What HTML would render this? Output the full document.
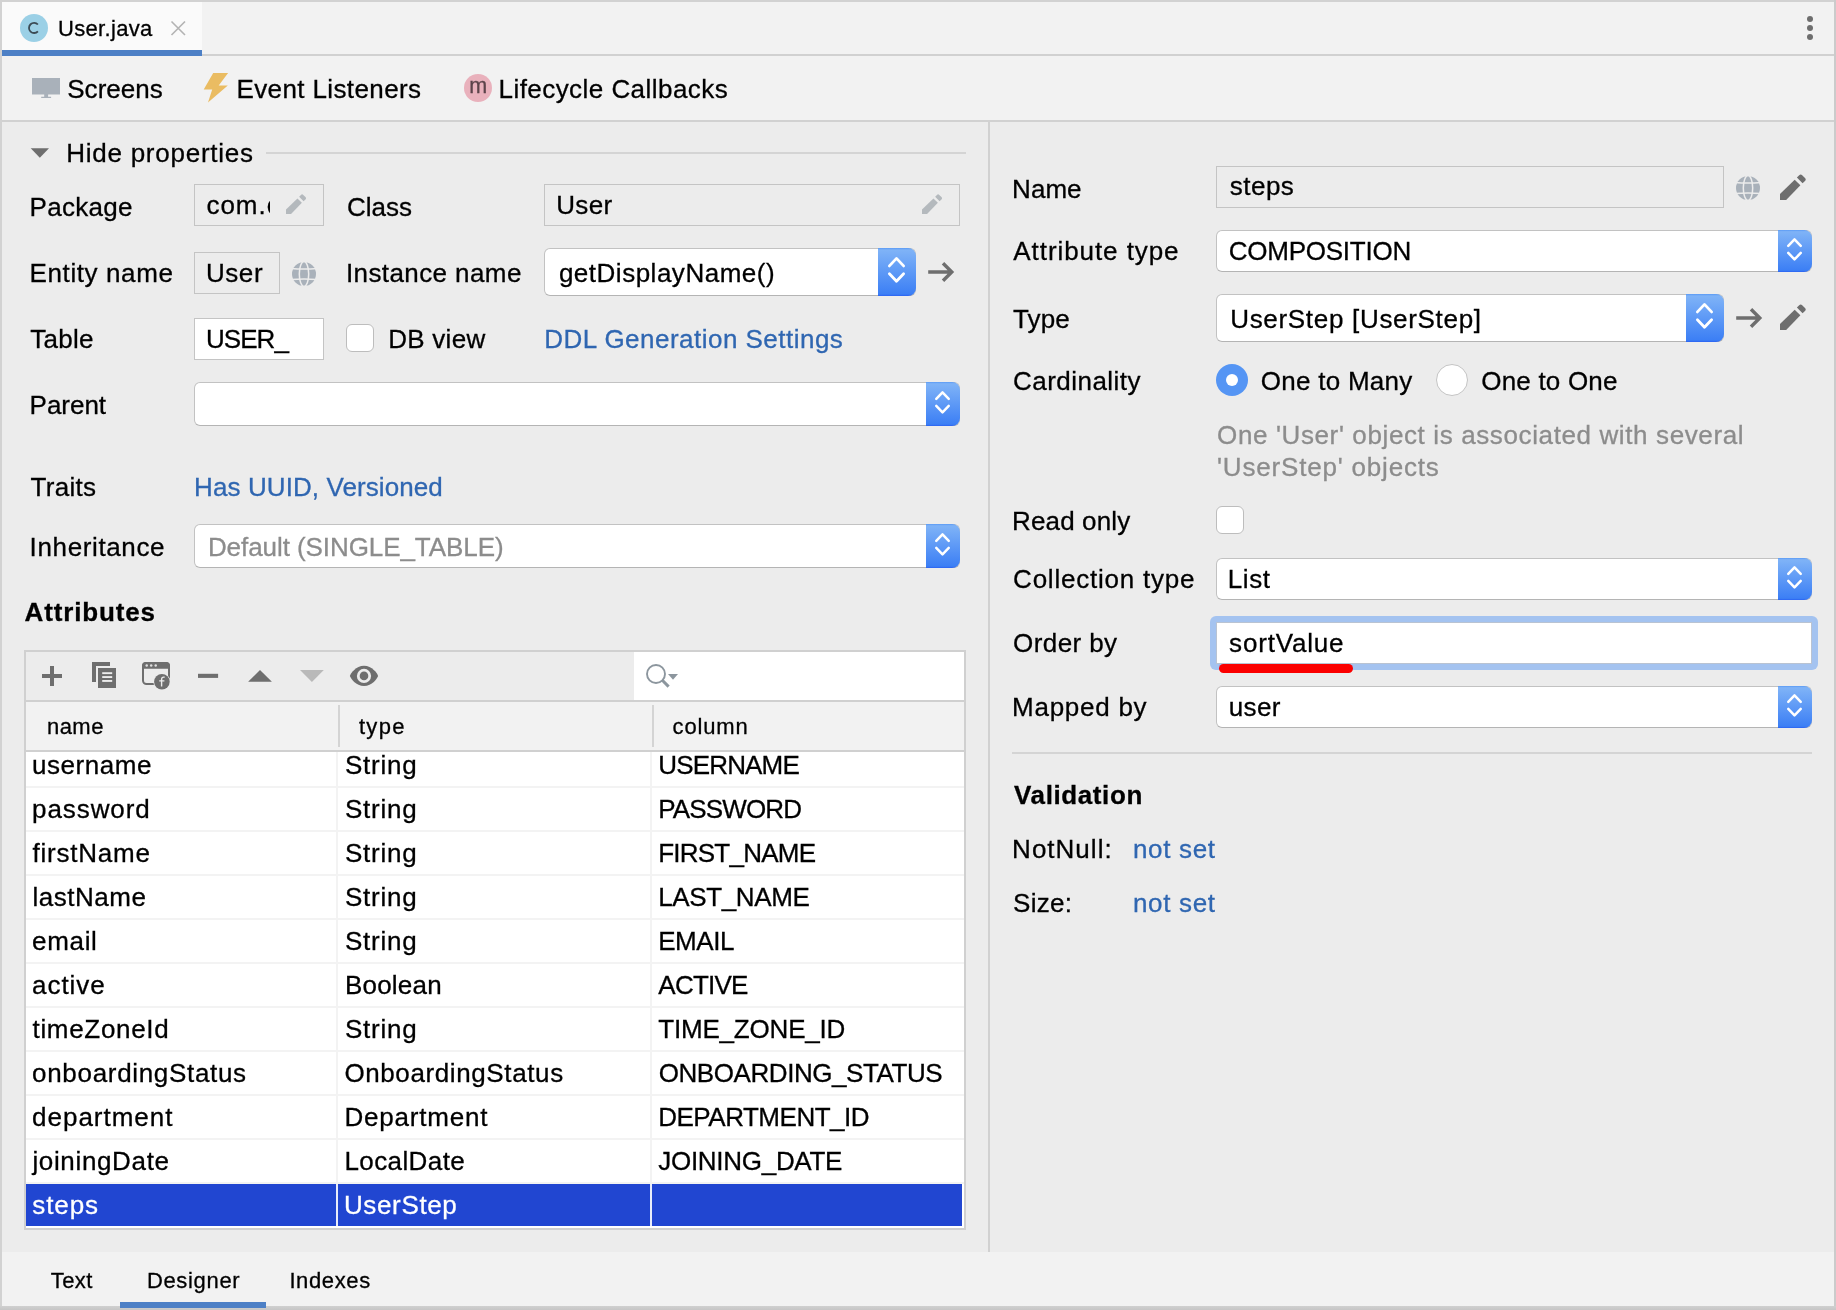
<!DOCTYPE html>
<html><head><meta charset="utf-8"><title>User.java</title><style>
html,body{margin:0;padding:0}
body{width:1836px;height:1310px;overflow:hidden;background:#ececec;position:relative;font-family:"Liberation Sans",sans-serif}
.b{position:absolute;display:block}
.t{position:absolute;white-space:pre;font-family:"Liberation Sans",sans-serif;color:#000;-webkit-text-stroke:0.3px}
.ro{border:1px solid #c4c4c4;box-sizing:border-box}
.tf{border:1px solid #c4c4c4;box-sizing:border-box;background:#fff}
.combo{background:#fff;border:1px solid #c2c2c2;border-bottom-color:#b4b4b4;border-radius:6px;box-sizing:border-box}
.cbtn{background:linear-gradient(#5a9af5 0,#7fb3f7 4%,#3c7ff5 96%,#2a62f2 100%);border-radius:0 8px 8px 0}
.chk{width:28px;height:28px;box-sizing:border-box;border:1px solid #bdbdbd;border-radius:6px;background:#fff}
.radio{width:32px;height:32px;box-sizing:border-box;border:1px solid #c4c4c4;border-radius:50%;background:#fff}
.radio.on{border:none;background:#5595f4}
.radio.on i{position:absolute;left:10px;top:10px;width:12px;height:12px;border-radius:50%;background:#fff}
</style></head>
<body>
<div class="b " style="left:0px;top:0px;width:1836px;height:56px;background:#f2f2f2"></div>
<div class="b " style="left:2px;top:2px;width:200px;height:48px;background:#fafafa"></div>
<div class="b " style="left:202px;top:54px;width:1632px;height:2px;background:#d1d1d1"></div>
<div class="b " style="left:2px;top:50px;width:200px;height:6px;background:#4d80c6"></div>
<div class="b " style="left:0px;top:56px;width:1836px;height:64px;background:#f2f2f2"></div>
<div class="b " style="left:0px;top:120px;width:1836px;height:2px;background:#d1d1d1"></div>
<div class="b " style="left:988px;top:122px;width:2px;height:1130px;background:#d1d1d1"></div>
<div class="b " style="left:0px;top:1252px;width:1836px;height:58px;background:#f2f2f2"></div>
<div class="b" style="left:20px;top:14px;width:28px;height:28px;border-radius:50%;background:#9bd0e6"></div>
<svg class="b" style="left:20px;top:14px" width="28" height="28" viewBox="0 0 28 28"><path d="M17.9 10.5 A5.1 5.1 0 1 0 17.9 17.3" fill="none" stroke="#3b4a54" stroke-width="1.8"/></svg>
<svg class="b" style="left:170px;top:20px" width="17" height="17" viewBox="0 0 17 17"><path d="M1.5 1.5 L15 15 M15 1.5 L1.5 15" stroke="#b3b3b3" stroke-width="1.6" fill="none"/></svg>
<svg class="b" style="left:1804px;top:12px" width="12" height="32" viewBox="0 0 12 32"><circle cx="6" cy="7" r="3" fill="#6e6e6e"/><circle cx="6" cy="16" r="3" fill="#6e6e6e"/><circle cx="6" cy="25" r="3" fill="#6e6e6e"/></svg>
<svg class="b" style="left:30px;top:74px" width="32" height="28" viewBox="0 0 32 28"><path d="M2 4 H30 V20.6 H18.1 V22.8 H21.1 V24 H11.2 V22.8 H14.2 V20.6 H2 Z" fill="#a9b1ba"/></svg>
<svg class="b" style="left:200px;top:70px" width="32" height="36" viewBox="0 0 32 36"><path d="M13.2 3.1 H28.1 L18.7 15.5 H27.8 L8 32.5 L12.2 19.4 H3.7 Z" fill="#eabc62"/></svg>
<div class="b" style="left:464px;top:74px;width:28px;height:28px;border-radius:50%;background:#e9b1bc"></div>
<svg class="b" style="left:28px;top:144px" width="24" height="18" viewBox="0 0 24 18"><path d="M2.7 4.2 H21 L11.85 13.8 Z" fill="#6e6e6e"/></svg>
<div class="b " style="left:266px;top:152px;width:700px;height:2px;background:#d4d4d4"></div>
<div class="b ro" style="left:194px;top:184px;width:130px;height:42px;"></div>
<div class="b ro" style="left:544px;top:184px;width:416px;height:42px;"></div>
<div class="b ro" style="left:194px;top:252px;width:86px;height:42px;"></div>
<div class="b combo" style="left:544px;top:248px;width:372px;height:48px"><div class="b cbtn" style="right:-1px;top:-1px;width:38px;height:48px"><svg class="b" style="right:0;top:0" width="38" height="48" viewBox="0 0 38 48"><path d="M11.4 17.900000000000002 L18.5 10.400000000000002 L25.6 17.900000000000002 M11.4 25.7 L18.5 33.2 L25.6 25.7" fill="none" stroke="#fff" stroke-width="2.8" stroke-linecap="round" stroke-linejoin="round"/></svg></div></div>
<div class="b tf" style="left:194px;top:318px;width:130px;height:42px;"></div>
<div class="b chk" style="left:346px;top:324px"></div>
<div class="b combo" style="left:194px;top:382px;width:766px;height:44px"><div class="b cbtn" style="right:-1px;top:-1px;width:34px;height:44px"><svg class="b" style="right:0;top:0" width="34" height="44" viewBox="0 0 34 44"><path d="M10.25 16.849999999999998 L16.5 10.449999999999998 L22.75 16.849999999999998 M10.25 23.95 L16.5 30.35 L22.75 23.95" fill="none" stroke="#fff" stroke-width="2.5" stroke-linecap="round" stroke-linejoin="round"/></svg></div></div>
<div class="b combo" style="left:194px;top:524px;width:766px;height:44px"><div class="b cbtn" style="right:-1px;top:-1px;width:34px;height:44px"><svg class="b" style="right:0;top:0" width="34" height="44" viewBox="0 0 34 44"><path d="M10.25 16.849999999999998 L16.5 10.449999999999998 L22.75 16.849999999999998 M10.25 23.95 L16.5 30.35 L22.75 23.95" fill="none" stroke="#fff" stroke-width="2.5" stroke-linecap="round" stroke-linejoin="round"/></svg></div></div>
<div class="b " style="left:24px;top:650px;width:942px;height:580px;background:#d0d0d0"></div>
<div class="b " style="left:26px;top:652px;width:938px;height:48px;background:#ececec"></div>
<div class="b " style="left:634px;top:652px;width:330px;height:48px;background:#ffffff"></div>
<div class="b " style="left:26px;top:702px;width:938px;height:48px;background:#f2f2f2"></div>
<div class="b " style="left:338px;top:705px;width:2px;height:42px;background:#d4d4d4"></div>
<div class="b " style="left:652px;top:705px;width:2px;height:42px;background:#d4d4d4"></div>
<div class="b " style="left:26px;top:752px;width:938px;height:476px;background:#ffffff"></div>
<div class="b " style="left:26px;top:786px;width:938px;height:2px;background:#f3f3f3"></div>
<div class="b " style="left:26px;top:830px;width:938px;height:2px;background:#f3f3f3"></div>
<div class="b " style="left:26px;top:874px;width:938px;height:2px;background:#f3f3f3"></div>
<div class="b " style="left:26px;top:918px;width:938px;height:2px;background:#f3f3f3"></div>
<div class="b " style="left:26px;top:962px;width:938px;height:2px;background:#f3f3f3"></div>
<div class="b " style="left:26px;top:1006px;width:938px;height:2px;background:#f3f3f3"></div>
<div class="b " style="left:26px;top:1050px;width:938px;height:2px;background:#f3f3f3"></div>
<div class="b " style="left:26px;top:1094px;width:938px;height:2px;background:#f3f3f3"></div>
<div class="b " style="left:26px;top:1138px;width:938px;height:2px;background:#f3f3f3"></div>
<div class="b " style="left:26px;top:1182px;width:938px;height:2px;background:#f3f3f3"></div>
<div class="b " style="left:26px;top:1184px;width:936px;height:42px;background:#2146d1"></div>
<div class="b " style="left:336px;top:752px;width:2px;height:432px;background:#f3f3f3"></div>
<div class="b " style="left:650px;top:752px;width:2px;height:432px;background:#f3f3f3"></div>
<div class="b " style="left:336px;top:1184px;width:2px;height:42px;background:#e8ecfa"></div>
<div class="b " style="left:650px;top:1184px;width:2px;height:42px;background:#e8ecfa"></div>
<div class="b ro" style="left:1216px;top:166px;width:508px;height:42px;"></div>
<div class="b combo" style="left:1216px;top:230px;width:596px;height:42px"><div class="b cbtn" style="right:-1px;top:-1px;width:34px;height:42px"><svg class="b" style="right:0;top:0" width="34" height="42" viewBox="0 0 34 42"><path d="M10.25 15.849999999999998 L16.5 9.449999999999998 L22.75 15.849999999999998 M10.25 22.95 L16.5 29.35 L22.75 22.95" fill="none" stroke="#fff" stroke-width="2.5" stroke-linecap="round" stroke-linejoin="round"/></svg></div></div>
<div class="b combo" style="left:1216px;top:294px;width:508px;height:48px"><div class="b cbtn" style="right:-1px;top:-1px;width:38px;height:48px"><svg class="b" style="right:0;top:0" width="38" height="48" viewBox="0 0 38 48"><path d="M11.4 17.900000000000002 L18.5 10.400000000000002 L25.6 17.900000000000002 M11.4 25.7 L18.5 33.2 L25.6 25.7" fill="none" stroke="#fff" stroke-width="2.8" stroke-linecap="round" stroke-linejoin="round"/></svg></div></div>
<div class="b radio on" style="left:1216px;top:364px"><i></i></div>
<div class="b radio" style="left:1436px;top:364px"></div>
<div class="b chk" style="left:1216px;top:506px"></div>
<div class="b combo" style="left:1216px;top:558px;width:596px;height:42px"><div class="b cbtn" style="right:-1px;top:-1px;width:34px;height:42px"><svg class="b" style="right:0;top:0" width="34" height="42" viewBox="0 0 34 42"><path d="M10.25 15.849999999999998 L16.5 9.449999999999998 L22.75 15.849999999999998 M10.25 22.95 L16.5 29.35 L22.75 22.95" fill="none" stroke="#fff" stroke-width="2.5" stroke-linecap="round" stroke-linejoin="round"/></svg></div></div>
<div class="b " style="left:1210px;top:616px;width:608px;height:54px;background:#a4c3f0;border-radius:6px"></div>
<div class="b " style="left:1216px;top:622px;width:596px;height:42px;background:#fff;border:1px solid #b9c3d2;box-sizing:border-box"></div>
<div class="b " style="left:1218.5px;top:663.5px;width:134.5px;height:9.0px;background:#fb0000;border-radius:4.5px"></div>
<div class="b combo" style="left:1216px;top:686px;width:596px;height:42px"><div class="b cbtn" style="right:-1px;top:-1px;width:34px;height:42px"><svg class="b" style="right:0;top:0" width="34" height="42" viewBox="0 0 34 42"><path d="M10.25 15.849999999999998 L16.5 9.449999999999998 L22.75 15.849999999999998 M10.25 22.95 L16.5 29.35 L22.75 22.95" fill="none" stroke="#fff" stroke-width="2.5" stroke-linecap="round" stroke-linejoin="round"/></svg></div></div>
<div class="b " style="left:1012px;top:752px;width:800px;height:2px;background:#d4d4d4"></div>
<div class="b " style="left:120px;top:1302px;width:146px;height:6px;background:#4d80c6"></div>
<div class="b " style="left:0px;top:0px;width:1836px;height:2px;background:#d2d2d2"></div>
<div class="b " style="left:0px;top:0px;width:2px;height:1310px;background:#d2d2d2"></div>
<div class="b " style="left:1834px;top:0px;width:2px;height:1310px;background:#cbcbcb"></div>
<div class="b " style="left:0px;top:1306px;width:1836px;height:4px;background:linear-gradient(#d0d0d0,#c6c6c6)"></div>
<div class="b " style="left:120px;top:1302px;width:146px;height:6px;background:#4d80c6"></div>
<svg class="b" style="left:285.9px;top:193.7px" width="20.4" height="20.4" viewBox="0 0 26.2 26"><g fill="#b4b9bd"><path d="M0 19.8 L14.7 5.6 L20.4 11.2 L6.1 26 H0 Z"/><path d="M16.9 3.4 L19.2 1.1 Q20.7 -0.4 22.2 1.1 L25 3.9 Q26.5 5.4 25 6.9 L22.6 9.1 Z"/></g></svg>
<svg class="b" style="left:921.8px;top:193.7px" width="20.4" height="20.4" viewBox="0 0 26.2 26"><g fill="#b4b9bd"><path d="M0 19.8 L14.7 5.6 L20.4 11.2 L6.1 26 H0 Z"/><path d="M16.9 3.4 L19.2 1.1 Q20.7 -0.4 22.2 1.1 L25 3.9 Q26.5 5.4 25 6.9 L22.6 9.1 Z"/></g></svg>
<svg class="b" style="left:291px;top:261.4px" width="26" height="26" viewBox="0 0 26 26"><circle cx="13" cy="13" r="12" fill="#a9b1ba"/><g fill="none" stroke="#ececec" stroke-width="1.5"><ellipse cx="13" cy="13" rx="4.7" ry="12.5"/><path d="M0 7.4 Q13 8.8 26 7.4 M0 18.6 Q13 17.2 26 18.6"/></g></svg>
<svg class="b" style="left:1734.7px;top:175.2px" width="26" height="26" viewBox="0 0 26 26"><circle cx="13" cy="13" r="12" fill="#a9b1ba"/><g fill="none" stroke="#ececec" stroke-width="1.5"><ellipse cx="13" cy="13" rx="4.7" ry="12.5"/><path d="M0 7.4 Q13 8.8 26 7.4 M0 18.6 Q13 17.2 26 18.6"/></g></svg>
<svg class="b" style="left:928px;top:260.3px" width="28" height="24" viewBox="0 0 28 24"><path d="M0.2 12 H23 M15 3.2 L23.8 12 L15 20.8" fill="none" stroke="#6e6e6e" stroke-width="3.4" stroke-linejoin="miter"/></svg>
<svg class="b" style="left:1736px;top:306px" width="28" height="24" viewBox="0 0 28 24"><path d="M0.2 12 H23 M15 3.2 L23.8 12 L15 20.8" fill="none" stroke="#6e6e6e" stroke-width="3.4" stroke-linejoin="miter"/></svg>
<svg class="b" style="left:1779.8px;top:174px" width="26.2" height="26.2" viewBox="0 0 26.2 26"><g fill="#6e6e6e"><path d="M0 19.8 L14.7 5.6 L20.4 11.2 L6.1 26 H0 Z"/><path d="M16.9 3.4 L19.2 1.1 Q20.7 -0.4 22.2 1.1 L25 3.9 Q26.5 5.4 25 6.9 L22.6 9.1 Z"/></g></svg>
<svg class="b" style="left:1779.8px;top:304px" width="26.2" height="26.2" viewBox="0 0 26.2 26"><g fill="#6e6e6e"><path d="M0 19.8 L14.7 5.6 L20.4 11.2 L6.1 26 H0 Z"/><path d="M16.9 3.4 L19.2 1.1 Q20.7 -0.4 22.2 1.1 L25 3.9 Q26.5 5.4 25 6.9 L22.6 9.1 Z"/></g></svg>
<svg class="b" style="left:40px;top:664px" width="24" height="24" viewBox="0 0 24 24"><path d="M2 10 H10 V2 H14 V10 H22 V14 H14 V22 H10 V14 H2 Z" fill="#6e6e6e"/></svg>
<svg class="b" style="left:90px;top:660px" width="28" height="30" viewBox="0 0 28 30"><path d="M2 2 H20 V6 H6 V22 H2 Z" fill="#6e6e6e"/><rect x="8" y="8" width="18" height="20" fill="#6e6e6e"/><g fill="#ececec"><rect x="12.2" y="12.2" width="10" height="1.9"/><rect x="12.2" y="16.1" width="10" height="1.9"/><rect x="12.2" y="20" width="10" height="1.9"/></g></svg>
<svg class="b" style="left:140px;top:660px" width="32" height="32" viewBox="0 0 32 32"><rect x="3" y="3" width="26" height="21" rx="3.5" fill="none" stroke="#6e6e6e" stroke-width="2"/><path d="M2 8.8 V5.5 Q2 2 5.5 2 H26.5 Q30 2 30 5.5 V8.8 Z" fill="#6e6e6e"/><g fill="#e0e0e0"><circle cx="6.7" cy="5.6" r="1.25"/><circle cx="11.2" cy="5.6" r="1.25"/><circle cx="15.7" cy="5.6" r="1.25"/></g><circle cx="21.9" cy="21.8" r="8.6" fill="#ececec"/><circle cx="21.9" cy="21.8" r="7.8" fill="#6e6e6e"/><path d="M24.6 17.3 Q21.6 16.6 21.6 19.6 V26.6 M19.2 20.9 H24.4" fill="none" stroke="#ececec" stroke-width="1.4"/></svg>
<svg class="b" style="left:196px;top:670px" width="24" height="12" viewBox="0 0 24 12"><rect x="2" y="3.8" width="20.1" height="4.1" fill="#6e6e6e"/></svg>
<svg class="b" style="left:246px;top:666px" width="28" height="20" viewBox="0 0 28 20"><path d="M2.1 15.8 H25.9 L14 3.9 Z" fill="#6e6e6e"/></svg>
<svg class="b" style="left:298px;top:666px" width="28" height="20" viewBox="0 0 28 20"><path d="M2 3.9 H25.8 L13.9 15.9 Z" fill="#b9b9b9"/></svg>
<svg class="b" style="left:348px;top:662px" width="32" height="28" viewBox="0 0 32 28"><path d="M1.9 13.9 C2.6 11.5 8 3.8 16 3.8 S29.4 11.5 30.1 13.9 C29.4 16.3 24 24 16 24 S2.6 16.3 1.9 13.9 Z" fill="#6e6e6e"/><circle cx="16" cy="13.9" r="7.1" fill="#ececec"/><circle cx="16" cy="13.9" r="4.3" fill="#6e6e6e"/></svg>
<svg class="b" style="left:642px;top:660px" width="40" height="32" viewBox="0 0 40 32"><circle cx="14" cy="14" r="9" fill="none" stroke="#8c969e" stroke-width="1.9"/><path d="M20.3 20.2 L26.6 26.6" stroke="#8c969e" stroke-width="3" fill="none"/><path d="M26 14 H36 L31 19.8 Z" fill="#8c969e"/></svg>
<div class="b" style="left:0;top:0;width:1836px;height:1310px;will-change:transform">
<span class="t" style="left:469.3px;top:75.8px;font-size:21.5px;line-height:21.5px;color:#5c434a">m</span>
<div class="b" style="left:200px;top:186px;width:69.8px;height:38px;overflow:hidden"><span class="t" style="left:6.4px;top:5.5px;font-size:26px;line-height:26px;letter-spacing:1px">com.company</span></div>
<span class="t" style="left:58.0px;top:17.5px;font-size:22px;line-height:22px;letter-spacing:0.32px;color:#000000">User.java</span>
<span class="t" style="left:67.2px;top:76.0px;font-size:26px;line-height:26px;letter-spacing:0.05px;color:#000000">Screens</span>
<span class="t" style="left:236.5px;top:76.0px;font-size:26px;line-height:26px;letter-spacing:0.38px;color:#000000">Event Listeners</span>
<span class="t" style="left:498.5px;top:76.0px;font-size:26px;line-height:26px;letter-spacing:0.45px;color:#000000">Lifecycle Callbacks</span>
<span class="t" style="left:66.2px;top:140.0px;font-size:26px;line-height:26px;letter-spacing:0.75px;color:#000000">Hide properties</span>
<span class="t" style="left:29.6px;top:194.0px;font-size:26px;line-height:26px;letter-spacing:0.30px;color:#000000">Package</span>
<span class="t" style="left:346.9px;top:194.0px;font-size:26px;line-height:26px;letter-spacing:-0.00px;color:#000000">Class</span>
<span class="t" style="left:556.3px;top:192.0px;font-size:26px;line-height:26px;letter-spacing:0.29px;color:#000000">User</span>
<span class="t" style="left:29.6px;top:260.0px;font-size:26px;line-height:26px;letter-spacing:0.60px;color:#000000">Entity name</span>
<span class="t" style="left:205.9px;top:260.0px;font-size:26px;line-height:26px;letter-spacing:0.59px;color:#000000">User</span>
<span class="t" style="left:345.9px;top:260.0px;font-size:26px;line-height:26px;letter-spacing:0.41px;color:#000000">Instance name</span>
<span class="t" style="left:558.9px;top:260.0px;font-size:26px;line-height:26px;letter-spacing:0.51px;color:#000000">getDisplayName()</span>
<span class="t" style="left:30.2px;top:326.0px;font-size:26px;line-height:26px;letter-spacing:0.30px;color:#000000">Table</span>
<span class="t" style="left:205.9px;top:326.0px;font-size:26px;line-height:26px;letter-spacing:-0.93px;color:#000000">USER_</span>
<span class="t" style="left:388.2px;top:326.0px;font-size:26px;line-height:26px;letter-spacing:0.27px;color:#000000">DB view</span>
<span class="t" style="left:544.2px;top:326.0px;font-size:26px;line-height:26px;letter-spacing:0.48px;color:#2f66b1">DDL Generation Settings</span>
<span class="t" style="left:29.6px;top:392.0px;font-size:26px;line-height:26px;letter-spacing:-0.02px;color:#000000">Parent</span>
<span class="t" style="left:30.6px;top:474.0px;font-size:26px;line-height:26px;letter-spacing:0.29px;color:#000000">Traits</span>
<span class="t" style="left:194.1px;top:474.0px;font-size:26px;line-height:26px;letter-spacing:0.09px;color:#2f66b1">Has UUID, Versioned</span>
<span class="t" style="left:29.6px;top:534.0px;font-size:26px;line-height:26px;letter-spacing:0.63px;color:#000000">Inheritance</span>
<span class="t" style="left:207.9px;top:534.0px;font-size:26px;line-height:26px;letter-spacing:-0.07px;color:#8c8c8c">Default (SINGLE_TABLE)</span>
<span class="t" style="left:24.6px;top:599.0px;font-size:26px;line-height:26px;letter-spacing:0.85px;color:#000000;font-weight:700">Attributes</span>
<span class="t" style="left:46.9px;top:715.5px;font-size:22px;line-height:22px;letter-spacing:0.50px;color:#000000">name</span>
<span class="t" style="left:358.9px;top:715.5px;font-size:22px;line-height:22px;letter-spacing:1.32px;color:#000000">type</span>
<span class="t" style="left:672.6px;top:715.5px;font-size:22px;line-height:22px;letter-spacing:0.82px;color:#000000">column</span>
<span class="t" style="left:32.1px;top:752.0px;font-size:26px;line-height:26px;letter-spacing:0.53px;color:#000000">username</span>
<span class="t" style="left:344.9px;top:752.0px;font-size:26px;line-height:26px;letter-spacing:0.77px;color:#000000">String</span>
<span class="t" style="left:658.2px;top:752.0px;font-size:26px;line-height:26px;letter-spacing:-0.82px;color:#000000">USERNAME</span>
<span class="t" style="left:32.1px;top:796.0px;font-size:26px;line-height:26px;letter-spacing:0.91px;color:#000000">password</span>
<span class="t" style="left:344.9px;top:796.0px;font-size:26px;line-height:26px;letter-spacing:0.77px;color:#000000">String</span>
<span class="t" style="left:658.2px;top:796.0px;font-size:26px;line-height:26px;letter-spacing:-0.84px;color:#000000">PASSWORD</span>
<span class="t" style="left:32.5px;top:840.0px;font-size:26px;line-height:26px;letter-spacing:0.78px;color:#000000">firstName</span>
<span class="t" style="left:344.9px;top:840.0px;font-size:26px;line-height:26px;letter-spacing:0.77px;color:#000000">String</span>
<span class="t" style="left:658.2px;top:840.0px;font-size:26px;line-height:26px;letter-spacing:-0.76px;color:#000000">FIRST_NAME</span>
<span class="t" style="left:32.5px;top:884.0px;font-size:26px;line-height:26px;letter-spacing:0.52px;color:#000000">lastName</span>
<span class="t" style="left:344.9px;top:884.0px;font-size:26px;line-height:26px;letter-spacing:0.77px;color:#000000">String</span>
<span class="t" style="left:658.2px;top:884.0px;font-size:26px;line-height:26px;letter-spacing:-0.36px;color:#000000">LAST_NAME</span>
<span class="t" style="left:32.1px;top:928.0px;font-size:26px;line-height:26px;letter-spacing:0.66px;color:#000000">email</span>
<span class="t" style="left:344.9px;top:928.0px;font-size:26px;line-height:26px;letter-spacing:0.77px;color:#000000">String</span>
<span class="t" style="left:658.2px;top:928.0px;font-size:26px;line-height:26px;letter-spacing:-0.42px;color:#000000">EMAIL</span>
<span class="t" style="left:32.1px;top:972.0px;font-size:26px;line-height:26px;letter-spacing:0.93px;color:#000000">active</span>
<span class="t" style="left:344.9px;top:972.0px;font-size:26px;line-height:26px;letter-spacing:0.22px;color:#000000">Boolean</span>
<span class="t" style="left:658.3px;top:972.0px;font-size:26px;line-height:26px;letter-spacing:-0.75px;color:#000000">ACTIVE</span>
<span class="t" style="left:32.5px;top:1016.0px;font-size:26px;line-height:26px;letter-spacing:0.68px;color:#000000">timeZoneId</span>
<span class="t" style="left:344.9px;top:1016.0px;font-size:26px;line-height:26px;letter-spacing:0.77px;color:#000000">String</span>
<span class="t" style="left:658.3px;top:1016.0px;font-size:26px;line-height:26px;letter-spacing:-0.20px;color:#000000">TIME_ZONE_ID</span>
<span class="t" style="left:32.1px;top:1060.0px;font-size:26px;line-height:26px;letter-spacing:0.68px;color:#000000">onboardingStatus</span>
<span class="t" style="left:344.4px;top:1060.0px;font-size:26px;line-height:26px;letter-spacing:0.61px;color:#000000">OnboardingStatus</span>
<span class="t" style="left:658.7px;top:1060.0px;font-size:26px;line-height:26px;letter-spacing:-0.43px;color:#000000">ONBOARDING_STATUS</span>
<span class="t" style="left:32.1px;top:1104.0px;font-size:26px;line-height:26px;letter-spacing:0.98px;color:#000000">department</span>
<span class="t" style="left:344.4px;top:1104.0px;font-size:26px;line-height:26px;letter-spacing:0.80px;color:#000000">Department</span>
<span class="t" style="left:658.2px;top:1104.0px;font-size:26px;line-height:26px;letter-spacing:-0.48px;color:#000000">DEPARTMENT_ID</span>
<span class="t" style="left:32.4px;top:1148.0px;font-size:26px;line-height:26px;letter-spacing:0.65px;color:#000000">joiningDate</span>
<span class="t" style="left:344.4px;top:1148.0px;font-size:26px;line-height:26px;letter-spacing:0.41px;color:#000000">LocalDate</span>
<span class="t" style="left:658.3px;top:1148.0px;font-size:26px;line-height:26px;letter-spacing:-0.29px;color:#000000">JOINING_DATE</span>
<span class="t" style="left:32.3px;top:1192.0px;font-size:26px;line-height:26px;letter-spacing:0.89px;color:#ffffff">steps</span>
<span class="t" style="left:343.9px;top:1192.0px;font-size:26px;line-height:26px;letter-spacing:0.65px;color:#ffffff">UserStep</span>
<span class="t" style="left:50.7px;top:1269.5px;font-size:22px;line-height:22px;letter-spacing:0.45px;color:#000000">Text</span>
<span class="t" style="left:146.9px;top:1269.5px;font-size:22px;line-height:22px;letter-spacing:0.67px;color:#000000">Designer</span>
<span class="t" style="left:289.4px;top:1269.5px;font-size:22px;line-height:22px;letter-spacing:0.62px;color:#000000">Indexes</span>
<span class="t" style="left:1012.1px;top:176.0px;font-size:26px;line-height:26px;letter-spacing:0.04px;color:#000000">Name</span>
<span class="t" style="left:1229.7px;top:173.0px;font-size:26px;line-height:26px;letter-spacing:0.51px;color:#000000">steps</span>
<span class="t" style="left:1013.3px;top:238.0px;font-size:26px;line-height:26px;letter-spacing:0.93px;color:#000000">Attribute type</span>
<span class="t" style="left:1228.7px;top:238.0px;font-size:26px;line-height:26px;letter-spacing:-0.24px;color:#000000">COMPOSITION</span>
<span class="t" style="left:1013.1px;top:306.0px;font-size:26px;line-height:26px;letter-spacing:0.06px;color:#000000">Type</span>
<span class="t" style="left:1230.2px;top:306.0px;font-size:26px;line-height:26px;letter-spacing:0.69px;color:#000000">UserStep [UserStep]</span>
<span class="t" style="left:1013.1px;top:368.0px;font-size:26px;line-height:26px;letter-spacing:0.45px;color:#000000">Cardinality</span>
<span class="t" style="left:1260.7px;top:368.0px;font-size:26px;line-height:26px;letter-spacing:0.28px;color:#000000">One to Many</span>
<span class="t" style="left:1481.3px;top:368.0px;font-size:26px;line-height:26px;letter-spacing:0.19px;color:#000000">One to One</span>
<span class="t" style="left:1217.1px;top:422.0px;font-size:26px;line-height:26px;letter-spacing:0.62px;color:#8c8c8c">One 'User' object is associated with several</span>
<span class="t" style="left:1217.1px;top:454.0px;font-size:26px;line-height:26px;letter-spacing:0.81px;color:#8c8c8c">'UserStep' objects</span>
<span class="t" style="left:1012.1px;top:508.0px;font-size:26px;line-height:26px;letter-spacing:0.13px;color:#000000">Read only</span>
<span class="t" style="left:1013.1px;top:566.0px;font-size:26px;line-height:26px;letter-spacing:0.77px;color:#000000">Collection type</span>
<span class="t" style="left:1227.7px;top:566.0px;font-size:26px;line-height:26px;letter-spacing:0.62px;color:#000000">List</span>
<span class="t" style="left:1013.1px;top:630.0px;font-size:26px;line-height:26px;letter-spacing:0.41px;color:#000000">Order by</span>
<span class="t" style="left:1229.1px;top:630.0px;font-size:26px;line-height:26px;letter-spacing:0.81px;color:#000000">sortValue</span>
<span class="t" style="left:1012.1px;top:694.0px;font-size:26px;line-height:26px;letter-spacing:0.73px;color:#000000">Mapped by</span>
<span class="t" style="left:1228.7px;top:694.0px;font-size:26px;line-height:26px;letter-spacing:0.39px;color:#000000">user</span>
<span class="t" style="left:1014.1px;top:782.0px;font-size:26px;line-height:26px;letter-spacing:0.60px;color:#000000;font-weight:700">Validation</span>
<span class="t" style="left:1012.1px;top:836.0px;font-size:26px;line-height:26px;letter-spacing:1.01px;color:#000000">NotNull:</span>
<span class="t" style="left:1132.9px;top:836.0px;font-size:26px;line-height:26px;letter-spacing:0.68px;color:#2f66b1">not set</span>
<span class="t" style="left:1013.1px;top:890.0px;font-size:26px;line-height:26px;letter-spacing:0.26px;color:#000000">Size:</span>
<span class="t" style="left:1132.9px;top:890.0px;font-size:26px;line-height:26px;letter-spacing:0.68px;color:#2f66b1">not set</span>
</div>
</body></html>
